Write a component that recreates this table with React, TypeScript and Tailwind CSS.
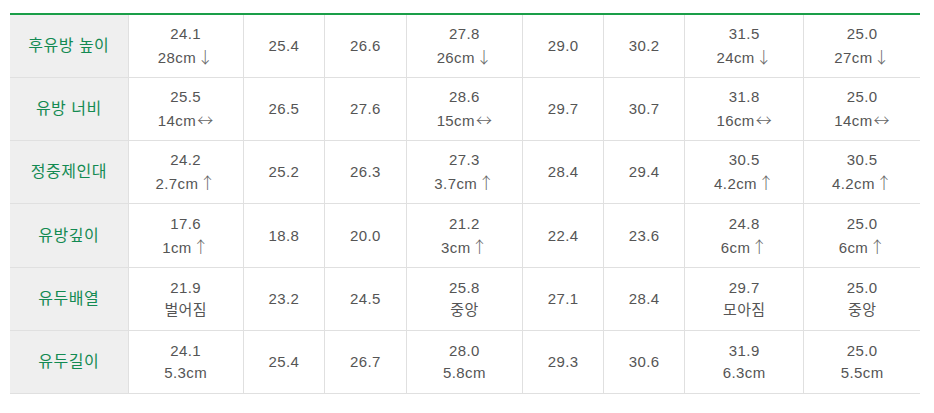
const cols = [118, 115, 81, 82, 116, 81, 81, 119, 116];

type Row = { label: string; cells: [string, string?][] };

const rows: Row[] = [
  {
    label: "후유방 높이",
    cells: [["24.1", "28cm↓"], ["25.4"], ["26.6"], ["27.8", "26cm↓"], ["29.0"], ["30.2"], ["31.5", "24cm↓"], ["25.0", "27cm↓"]],
  },
  {
    label: "유방 너비",
    cells: [["25.5", "14cm↔"], ["26.5"], ["27.6"], ["28.6", "15cm↔"], ["29.7"], ["30.7"], ["31.8", "16cm↔"], ["25.0", "14cm↔"]],
  },
  {
    label: "정중제인대",
    cells: [["24.2", "2.7cm↑"], ["25.2"], ["26.3"], ["27.3", "3.7cm↑"], ["28.4"], ["29.4"], ["30.5", "4.2cm↑"], ["30.5", "4.2cm↑"]],
  },
  {
    label: "유방깊이",
    cells: [["17.6", "1cm↑"], ["18.8"], ["20.0"], ["21.2", "3cm↑"], ["22.4"], ["23.6"], ["24.8", "6cm↑"], ["25.0", "6cm↑"]],
  },
  {
    label: "유두배열",
    cells: [["21.9", "벌어짐"], ["23.2"], ["24.5"], ["25.8", "중앙"], ["27.1"], ["28.4"], ["29.7", "모아짐"], ["25.0", "중앙"]],
  },
  {
    label: "유두길이",
    cells: [["24.1", "5.3cm"], ["25.4"], ["26.7"], ["28.0", "5.8cm"], ["29.3"], ["30.6"], ["31.9", "6.3cm"], ["25.0", "5.5cm"]],
  },
];

// arrows look taller in the original (gulim-ish), so give them a CJK face
function Value({ text }: { text: string }) {
  const m = text.match(/^(.*?)([↓↑↔])$/);
  if (!m) return <div>{text}</div>;
  return (
    <div>
      {m[1]}
      <span
        className="text-[16px] font-light text-[#666] ml-[1px]"
        style={{ fontFamily: '"Noto Sans CJK KR", sans-serif' }}
      >
        {m[2]}
      </span>
    </div>
  );
}

export default function App() {
  return (
    <div
      className="bg-white w-[934px] h-[413px] pt-[13px] pl-[10px]"
      style={{ fontFamily: '"Liberation Sans", "Noto Sans CJK KR", sans-serif' }}
    >
      <table className="table-fixed border-collapse w-[910px] border-t-2 border-t-[#1a9e48]">
        <colgroup>
          {cols.map((w, i) => (
            <col key={i} style={{ width: w }} />
          ))}
        </colgroup>
        <tbody>
          {rows.map((r) => (
            <tr key={r.label} className="h-[63.33px] border-b border-[#e0e0e0]">
              <th className="bg-[#efefef] text-[#138a52] text-[16px] tracking-[0.5px] font-normal text-center border-r border-[#e0e0e0]">
                {r.label}
              </th>
              {r.cells.map(([a, b], i) => (
                <td
                  key={i}
                  className="text-center text-[15px] tracking-[0.4px] leading-[22px] text-[#555] border-r border-[#e0e0e0] last:border-r-0"
                >
                  <Value text={a} />
                  {b && <Value text={b} />}
                </td>
              ))}
            </tr>
          ))}
        </tbody>
      </table>
    </div>
  );
}
